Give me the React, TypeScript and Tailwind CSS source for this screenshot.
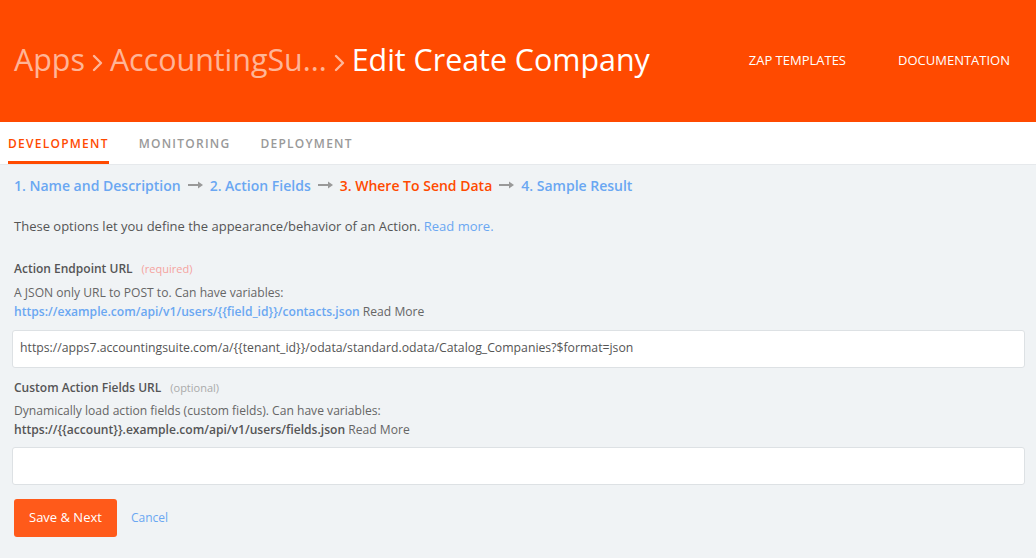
import React from "react";

const font = { fontFamily: '"Open Sans", "Liberation Sans", sans-serif' };

const Chevron = () => (
  <svg width="11" height="18" viewBox="0 0 11 18" className="mx-[7px] inline-block" aria-hidden>
    <path d="M2 2 L9 9 L2 16" fill="none" stroke="currentColor" strokeWidth="2.4" strokeLinecap="round" strokeLinejoin="round" />
  </svg>
);

const Arrow = () => (
  <svg width="15" height="8" viewBox="0 0 15 8" className="mx-[7px]" aria-hidden>
    <path d="M0 4 H12" stroke="#999" strokeWidth="2" />
    <path d="M10 0.5 L15 4 L10 7.5 Z" fill="#999" />
  </svg>
);

const Header = () => (
  <div className="bg-[#ff4a00] h-[122px] flex items-center justify-between pl-[14px] pr-[26px]">
    <h1 className="text-[30.4px] leading-none text-white flex items-center pb-[2px]">
      <span className="text-white/60">Apps</span>
      <span className="text-white/60">
        <Chevron />
      </span>
      <span className="text-white/60">AccountingSu...</span>
      <span className="text-white/60">
        <Chevron />
      </span>
      <span>Edit Create Company</span>
    </h1>
    <div className="flex items-center gap-[52px] text-[13px] text-white">
      <a>ZAP TEMPLATES</a>
      <a>DOCUMENTATION</a>
    </div>
  </div>
);

const tabs = ["DEVELOPMENT", "MONITORING", "DEPLOYMENT"];

const Tabs = () => (
  <div className="bg-white h-[43px] flex items-stretch pl-[8px] gap-[30px] border-b border-[#e6e9ec]">
    {tabs.map((t, i) => (
      <div
        key={t}
        className={`flex items-center pt-[4px] text-[12px] font-semibold tracking-[1.25px] border-b-[3px] ${
          i === 0 ? "text-[#ff4a00] border-[#ff4a00]" : "text-[#999] border-transparent"
        }`}
      >
        {t}
      </div>
    ))}
  </div>
);

const steps = ["1. Name and Description", "2. Action Fields", "3. Where To Send Data", "4. Sample Result"];

const Steps = () => (
  <div className="flex items-center h-[20px] text-[14px] font-semibold mt-[10px]">
    {steps.map((s, i) => (
      <React.Fragment key={s}>
        {i > 0 && <Arrow />}
        <span className={i === 2 ? "text-[#ff4a00]" : "text-[#6aa7f2]"}>{s}</span>
      </React.Fragment>
    ))}
  </div>
);

export default function App() {
  return (
    <div className="w-[1036px] h-[558px] bg-[#f0f3f5] overflow-hidden" style={font}>
      <Header />
      <Tabs />
      <div className="pl-[12px] pr-[11px]">
        <div className="pl-[2px]">
          <Steps />
          <p className="text-[13px] text-[#555] mt-[22px]">
            These options let you define the appearance/behavior of an Action.{" "}
            <a className="text-[#6aa7f2]">Read more.</a>
          </p>
          <div className="mt-[23px] flex items-baseline">
            <span className="text-[12px] font-semibold text-[#555]">Action Endpoint URL</span>
            <span className="text-[11px] text-[#f5a3a0] ml-[9px]">(required)</span>
          </div>
          <p className="text-[12.1px] text-[#666] mt-[5px] leading-[19px]">
            A JSON only URL to POST to. Can have variables:
            <br />
            <span className="font-semibold text-[#6aa7f2]">https://example.com/api/v1/users/{"{{field_id}}"}/contacts.json</span>{" "}
            Read More
          </p>
        </div>
        <div className="mt-[9px] h-[38px] bg-white border border-[#dde1e4] rounded-[3px] flex items-center pl-[7px] text-[12.25px] text-[#555]">
          https://apps7.accountingsuite.com/a/{"{{tenant_id}}"}/odata/standard.odata/Catalog_Companies?$format=json
        </div>
        <div className="pl-[2px]">
          <div className="mt-[11px] flex items-baseline">
            <span className="text-[12px] font-semibold text-[#555]">Custom Action Fields URL</span>
            <span className="text-[11px] text-[#aaa] ml-[9px]">(optional)</span>
          </div>
          <p className="text-[12.1px] text-[#666] mt-[4px] leading-[19px]">
            Dynamically load action fields (custom fields). Can have variables:
            <br />
            <span className="font-semibold text-[#555]">https://{"{{account}}"}.example.com/api/v1/users/fields.json</span>{" "}
            Read More
          </p>
        </div>
        <div className="mt-[8px] h-[38px] bg-white border border-[#dde1e4] rounded-[3px]" />
        <div className="mt-[14px] flex items-center pl-[2px]">
          <button className="bg-[#ff5a1a] text-white text-[13px] h-[38px] px-[15px] rounded-[3px]">
            Save &amp; Next
          </button>
          <a className="text-[12px] text-[#6aa7f2] ml-[14px]">Cancel</a>
        </div>
      </div>
    </div>
  );
}
